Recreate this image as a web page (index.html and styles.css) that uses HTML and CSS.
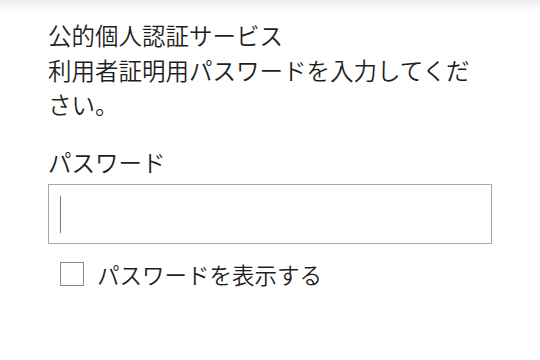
FILE: index.html
```html
<!DOCTYPE html>
<html lang="ja">
<head>
<meta charset="utf-8">
<link rel="stylesheet" href="styles.css">
</head>
<body>
<div class="page">
  <p class="desc">公的個人認証サービス<br>利用者証明用パスワードを入力してください。</p>
  <label class="label" for="pw">パスワード</label>
  <div class="input"><span class="caret"></span></div>
  <div class="check-row">
    <span class="box"></span>
    <span class="check-text">パスワードを表示する</span>
  </div>
</div>
</body>
</html>
```

FILE: styles.css
```css
html, body {
  margin: 0;
  padding: 0;
  background: #fff;
}
body {
  width: 540px;
  height: 360px;
  background: linear-gradient(to bottom, #ececec 0px, #f8f8f8 6px, #ffffff 14px);
  font-family: "Noto Sans CJK JP", "Noto Sans", sans-serif;
  font-weight: 350;
  color: #1e1e1e;
  overflow: hidden;
}
.page {
  padding: 18px 48px 0 48px;
  width: 444px;
  display: flex;
  flex-direction: column;
}
.desc {
  margin: 0;
  font-size: 23.5px;
  line-height: 34.5px;
}
.label {
  margin-top: 23px;
  font-size: 23.5px;
  line-height: 34.5px;
}
.input {
  margin-top: 5px;
  box-sizing: border-box;
  height: 60px;
  width: 444px;
  border: 1.5px solid #a8a8a8;
  display: flex;
  align-items: center;
  padding-left: 10.5px;
}
.caret {
  width: 1.5px;
  height: 37px;
  background: #777;
}
.check-row {
  margin-top: 15px;
  margin-left: 12px;
  display: flex;
  align-items: center;
  gap: 13px;
}
.box {
  box-sizing: border-box;
  width: 24px;
  height: 24px;
  border: 1.5px solid #8a8a8a;
}
.check-text {
  font-size: 22.5px;
  line-height: 30px;
}
```
